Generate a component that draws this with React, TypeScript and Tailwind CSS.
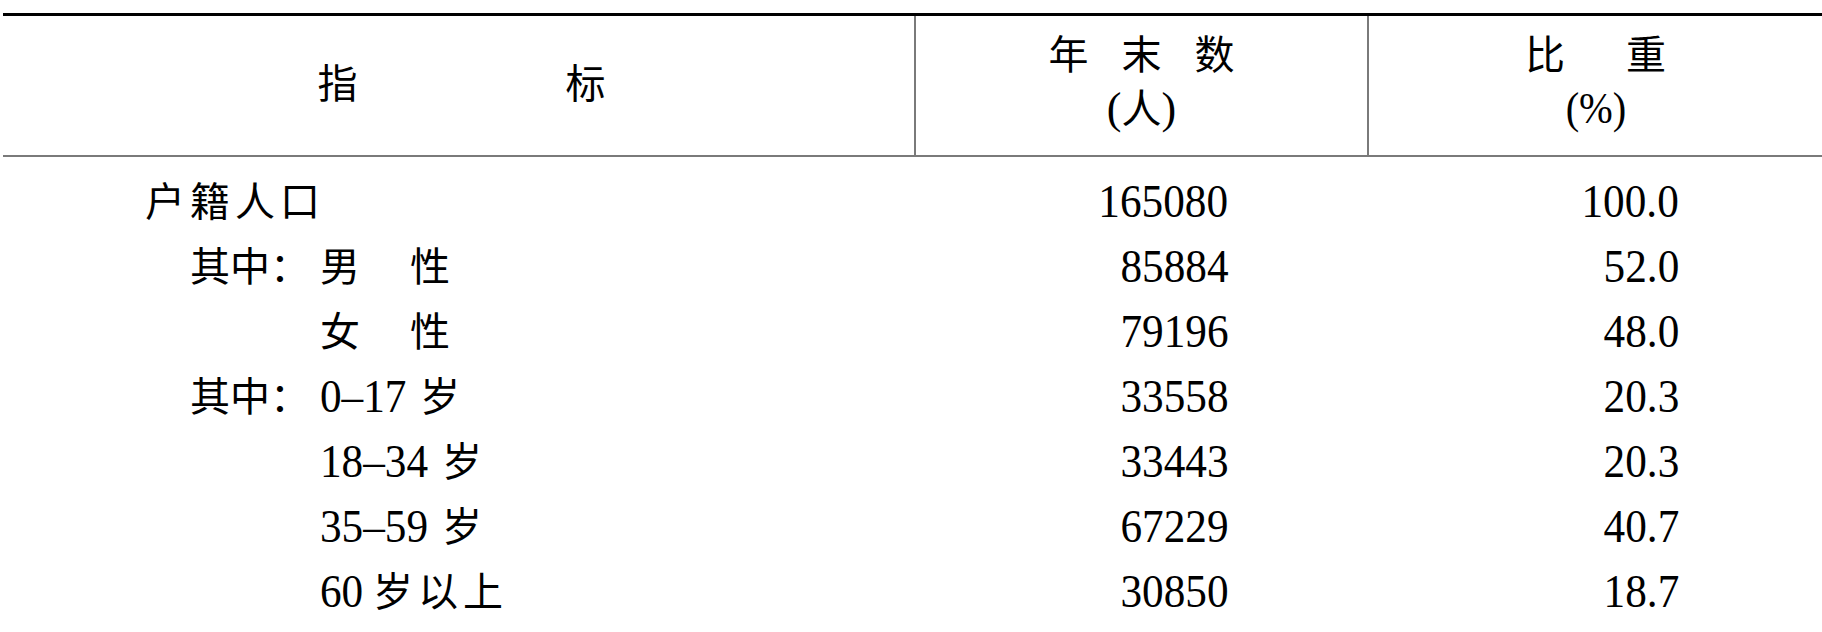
import React from "react";

const CJK = "font-['Noto_Sans_CJK_SC','Noto_Sans_CJK_JP',sans-serif]";
const SERIF = "font-['Liberation_Serif','Times_New_Roman',serif]";

function Cjk({ children, className = "" }: { children: React.ReactNode; className?: string }) {
  return (
    <span className={`${CJK} text-[40px] leading-none text-black pb-[6px] whitespace-pre ${className}`}>
      {children}
    </span>
  );
}

function Num({ children, className = "", origin = "origin-right" }: { children: React.ReactNode; className?: string; origin?: string }) {
  return (
    <span className={`${SERIF} inline-block text-[47px] leading-none text-black scale-x-[0.92] whitespace-pre ${origin} ${className}`}>
      {children}
    </span>
  );
}

type Row = { label: React.ReactNode; count: string; pct: string };

const rows: Row[] = [
  {
    label: (
      <div className="flex items-center pl-[142px]">
        <Cjk className="tracking-[5px]">户籍人口</Cjk>
      </div>
    ),
    count: "165080",
    pct: "100.0",
  },
  {
    label: (
      <div className="flex items-center pl-[187px]">
        <Cjk className="w-[130px]">其中：</Cjk>
        <Cjk className="w-[90px]">男</Cjk>
        <Cjk>性</Cjk>
      </div>
    ),
    count: "85884",
    pct: "52.0",
  },
  {
    label: (
      <div className="flex items-center pl-[317px]">
        <Cjk className="w-[90px]">女</Cjk>
        <Cjk>性</Cjk>
      </div>
    ),
    count: "79196",
    pct: "48.0",
  },
  {
    label: (
      <div className="flex items-center pl-[187px]">
        <Cjk className="w-[130px]">其中：</Cjk>
        <span className="w-[100px] flex">
          <Num origin="origin-left">0–17</Num>
        </span>
        <Cjk>岁</Cjk>
      </div>
    ),
    count: "33558",
    pct: "20.3",
  },
  {
    label: (
      <div className="flex items-center pl-[317px]">
        <span className="w-[122px] flex">
          <Num origin="origin-left">18–34</Num>
        </span>
        <Cjk>岁</Cjk>
      </div>
    ),
    count: "33443",
    pct: "20.3",
  },
  {
    label: (
      <div className="flex items-center pl-[317px]">
        <span className="w-[122px] flex">
          <Num origin="origin-left">35–59</Num>
        </span>
        <Cjk>岁</Cjk>
      </div>
    ),
    count: "67229",
    pct: "40.7",
  },
  {
    label: (
      <div className="flex items-center pl-[317px]">
        <span className="w-[53px] flex">
          <Num origin="origin-left">60</Num>
        </span>
        <Cjk className="tracking-[5px]">岁以上</Cjk>
      </div>
    ),
    count: "30850",
    pct: "18.7",
  },
];

export default function App() {
  return (
    <div className="w-[1822px] h-[632px] bg-white pt-[13px] pl-[3px] overflow-hidden">
      <div className="border-t-[3px] border-black">
        {/* header */}
        <div className="grid grid-cols-[913px_453px_453px] h-[141px] border-b-2 border-[#7a7a7a]">
          <div className="border-r-2 border-[#7a7a7a] flex items-center justify-center gap-[208px] pb-[4px] pl-[6px]">
            <Cjk>指</Cjk>
            <Cjk>标</Cjk>
          </div>
          <div className="border-r-2 border-[#7a7a7a] flex flex-col items-center pt-[12px]">
            <div className="h-[54px] flex items-center gap-[33px]">
              <Cjk>年</Cjk>
              <Cjk>末</Cjk>
              <Cjk>数</Cjk>
            </div>
            <div className="h-[54px] flex items-center">
              <span className={`${SERIF} text-[44px] leading-none`}>(</span>
              <Cjk className="pb-[2px]">人</Cjk>
              <span className={`${SERIF} text-[44px] leading-none`}>)</span>
            </div>
          </div>
          <div className="flex flex-col items-center pt-[12px]">
            <div className="h-[54px] flex items-center gap-[61px]">
              <Cjk>比</Cjk>
              <Cjk>重</Cjk>
            </div>
            <div className="h-[54px] flex items-center">
              <span className={`${SERIF} text-[44px] leading-none inline-block scale-x-[0.92]`}>(%)</span>
            </div>
          </div>
        </div>
        {/* body */}
        <div className="pt-[12px]">
          {rows.map((r, i) => (
            <div key={i} className="grid grid-cols-[915px_451px_453px] h-[65px]">
              <div className="flex items-center">{r.label}</div>
              <div className="flex items-center justify-end pr-[141px]">
                <Num>{r.count}</Num>
              </div>
              <div className="flex items-center justify-end pr-[143px]">
                <Num>{r.pct}</Num>
              </div>
            </div>
          ))}
        </div>
      </div>
    </div>
  );
}
